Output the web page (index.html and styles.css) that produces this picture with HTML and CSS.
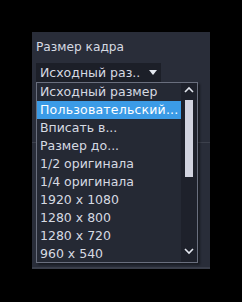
FILE: index.html
```html
<!DOCTYPE html>
<html lang="ru">
<head>
    <meta charset="UTF-8">
    <title>frame-size</title>
    <link rel="stylesheet" href="styles.css">
</head>
<body>
    <div class="panel">
        <p class="title">Размер кадра</p>
        <div class="select d-flex">
            <span>Исходный раз..</span>
            <span class="caret"></span>
        </div>
        <div class="sep"></div>
        <div class="list d-flex">
            <div class="items">
                <div class="item">Исходный размер</div>
                <div class="item active">Пользовательский...</div>
                <div class="item">Вписать в...</div>
                <div class="item">Размер до...</div>
                <div class="item">1/2 оригинала</div>
                <div class="item">1/4 оригинала</div>
                <div class="item">1920 x 1080</div>
                <div class="item">1280 x 800</div>
                <div class="item">1280 x 720</div>
                <div class="item">960 x 540</div>
            </div>
            <div class="scroll">
                <svg class="arrow" width="16" height="12" viewBox="0 0 16 12">
                    <path d="M4 9 L8 5 L12 9" fill="none" stroke="#e4e8f0" stroke-width="1.6"/>
                </svg>
                <div class="thumb"></div>
                <svg class="arrow down" width="16" height="12" viewBox="0 0 16 12">
                    <path d="M4 3 L8 7 L12 3" fill="none" stroke="#e4e8f0" stroke-width="1.6"/>
                </svg>
            </div>
        </div>
    </div>
</body>
</html>
```

FILE: styles.css
```css
body {
    margin: 0;
    background-color: #000;
    width: 242px;
    height: 302px;
    overflow: hidden;
    font-family: "DejaVu Sans", Verdana, sans-serif;
    font-size: 12.5px;
    color: #d6dae2;
}

.d-flex {
    display: flex;
}

.panel {
    position: relative;
    margin: 32px 0 0 32px;
    width: 178px;
    height: 237px;
    background-color: #292d39;
    border-bottom: 2px solid #3a3e4a;
    box-sizing: border-box;
    padding: 6px 0 0 4px;
}

.title {
    margin: 0;
    height: 25px;
    line-height: 18px;
    font-size: 12.2px;
}

.select {
    width: 125px;
    height: 19px;
    background-color: #1c1f28;
    align-items: center;
    justify-content: space-between;
    padding: 0 4px;
    box-sizing: border-box;
}

.caret {
    width: 0;
    height: 0;
    border-left: 4px solid transparent;
    border-right: 4px solid transparent;
    border-top: 5px solid #e4e8f0;
    margin-right: 0;
}

.sep {
    position: absolute;
    left: 0;
    right: 0;
    top: 110px;
    height: 1px;
    background-color: #3c404c;
}

.list {
    position: absolute;
    left: 4px;
    top: 50px;
    width: 162px;
    height: 181px;
    border: 1px solid #6a6f7e;
    box-sizing: border-box;
    background-color: #252934;
    box-shadow: 2px 2px 2px rgba(0, 0, 0, 0.4);
    z-index: 1;
}

.items {
    flex: 1;
}

.item {
    height: 18px;
    line-height: 18px;
    padding-left: 3px;
    white-space: nowrap;
}

.item.active {
    background-color: #3b9be6;
    color: #fff;
    letter-spacing: 0.2px;
}

.scroll {
    width: 16px;
    background-color: #1e212b;
    display: flex;
    flex-direction: column;
    align-items: center;
}

.arrow {
    display: block;
}

.thumb {
    width: 8px;
    height: 77px;
    margin-top: 5px;
    background-color: #d2d4e0;
}

.arrow.down {
    margin-top: auto;
    margin-bottom: 4px;
}
```
